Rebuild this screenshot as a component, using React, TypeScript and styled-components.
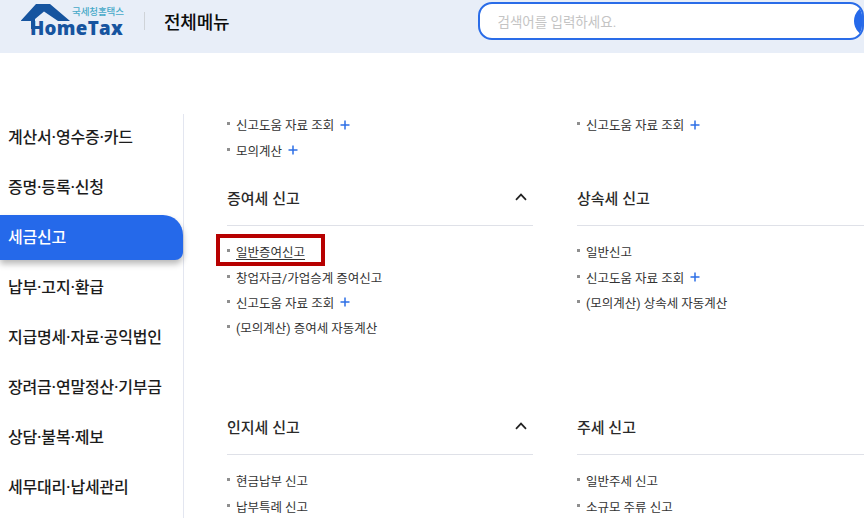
import React from "react";
import styled, { createGlobalStyle } from "styled-components";

const Global = createGlobalStyle`
  html, body { margin: 0; padding: 0; background: #fff; overflow: hidden; }
  body { font-family: Roboto, "Noto Sans CJK KR", "Noto Sans", sans-serif; }
  * { box-sizing: border-box; }
`;

const Page = styled.div`
  width: 864px;
  height: 518px;
  overflow: hidden;
`;

const Header = styled.header`
  height: 53px;
  background: #e8eef8;
  display: flex;
  align-items: center;
  padding: 0 0 12px 21px;
`;

const Logo = styled.div`
  position: relative;
  width: 104px;
  height: 36px;
  align-self: flex-start;
  margin-top: 3px;
  flex: none;
`;

const Roof = styled.svg`
  position: absolute;
  left: 0;
  top: 0;
`;

const LogoSub = styled.span`
  position: absolute;
  left: 51px;
  top: 3px;
  font-size: 9.5px;
  line-height: 12px;
  font-weight: 500;
  color: #46a9c8;
  white-space: nowrap;
  letter-spacing: -0.1px;
`;

const LogoName = styled.span`
  position: absolute;
  left: 9px;
  top: 16px;
  font-family: "Open Sans", "Liberation Sans", sans-serif;
  font-size: 18.7px;
  line-height: 17px;
  font-weight: 800;
  color: #16549f;
  white-space: nowrap;
  letter-spacing: 0.3px;
`;

const HeaderDivider = styled.div`
  width: 1px;
  height: 18px;
  background: #cfd3d8;
  margin: 0 19px;
  flex: none;
`;

const HeaderTitle = styled.h1`
  margin: 0;
  font-size: 18px;
  font-weight: 500;
  color: #0c0c0c;
  letter-spacing: -0.2px;
  width: 313.5px;
  flex: none;
`;

const SearchBox = styled.div`
  width: 386px;
  height: 38px;
  align-self: flex-start;
  margin-top: 2px;
  border: 2px solid #2a6ce8;
  border-radius: 14px;
  background: #fff;
  display: flex;
  align-items: center;
  justify-content: space-between;
  padding-left: 18px;
  font-size: 13.5px;
  color: #c4c4c4;
  flex: none;
  overflow: hidden;
`;

const SearchButton = styled.div`
  width: 32px;
  height: 32px;
  border-radius: 50%;
  background: #2569ea;
  margin-right: -24px;
  flex: none;
`;

const Body = styled.div`
  display: flex;
  padding-top: 61px;
`;

const Sidebar = styled.nav`
  width: 184px;
  height: 404px;
  flex: none;
  border-right: 1px solid #e3e6f0;
  display: flex;
  flex-direction: column;
  gap: 5px;
  padding-top: 1px;
`;

const SideItem = styled.div<{ $active?: boolean }>`
  height: 45px;
  width: 183px;
  display: flex;
  align-items: center;
  padding: 0 0 3px 8px;
  font-size: 16px;
  font-weight: 500;
  letter-spacing: -0.2px;
  color: ${(p) => (p.$active ? "#fff" : "#1c1c1c")};
  background: ${(p) => (p.$active ? "#2569ea" : "transparent")};
  border-radius: 0 20px 8px 0;
  box-shadow: ${(p) => (p.$active ? "0 4px 6px rgba(0,0,0,0.28)" : "none")};
`;

const Content = styled.main`
  margin-top: -2px;
  padding: 0 0 0 43px;
  display: grid;
  grid-template-columns: 306px 306px;
  column-gap: 44px;
  align-content: start;
`;

const Section = styled.section<{ $h: number }>`
  height: ${(p) => p.$h}px;
`;

const SectionHead = styled.div`
  height: 38px;
  border-bottom: 1px solid #dfe1e8;
  display: flex;
  align-items: flex-start;
  justify-content: space-between;
  font-size: 15px;
  font-weight: 500;
  line-height: 22px;
  color: #2a2a2a;
  padding-right: 6px;
`;

const Chevron = styled.svg`
  margin-top: 5px;
`;

const List = styled.ul<{ $top?: number }>`
  list-style: none;
  margin: 0;
  padding: ${(p) => p.$top ?? 0}px 0 0 0;
  display: flex;
  flex-direction: column;
`;

const Item = styled.li`
  height: 25.4px;
  display: flex;
  align-items: center;
  font-size: 12.5px;
  color: #333;
  white-space: nowrap;
  &::before {
    content: "";
    width: 3px;
    height: 3px;
    background: #8f8f8f;
    margin-right: 6px;
    margin-top: -2px;
    flex: none;
  }
`;

const LinkText = styled.span<{ $boxed?: boolean }>`
  position: relative;
  text-decoration: ${(p) => (p.$boxed ? "underline" : "none")};
  text-underline-offset: 2px;
`;

const Highlight = styled.span`
  position: absolute;
  left: -20px;
  top: -8px;
  width: 109px;
  height: 32px;
  border: 4px solid #b70000;
  pointer-events: none;
`;

const Plus = styled.svg`
  margin-left: 6px;
  flex: none;
`;

const PlusIcon = () => (
  <Plus width="10" height="10" viewBox="0 0 10 10">
    <path d="M5 0.5V9.5M0.5 5H9.5" stroke="#2d6fe6" strokeWidth="1.5" fill="none" />
  </Plus>
);

const ChevronUp = () => (
  <Chevron width="12" height="8" viewBox="0 0 12 8">
    <path d="M1 6.8L6 1.6L11 6.8" stroke="#222" strokeWidth="1.7" fill="none" />
  </Chevron>
);

const sideItems = [
  "계산서·영수증·카드",
  "증명·등록·신청",
  "세금신고",
  "납부·고지·환급",
  "지급명세·자료·공익법인",
  "장려금·연말정산·기부금",
  "상담·불복·제보",
  "세무대리·납세관리",
];

type Row = { t: string; plus?: boolean; boxed?: boolean };

const Rows = ({ rows, top }: { rows: Row[]; top?: number }) => (
  <List $top={top}>
    {rows.map((r) => (
      <Item key={r.t}>
        <LinkText $boxed={r.boxed}>
          {r.t}
          {r.boxed && <Highlight />}
        </LinkText>
        {r.plus && <PlusIcon />}
      </Item>
    ))}
  </List>
);

const Head = ({ title, chevron }: { title: string; chevron?: boolean }) => (
  <SectionHead>
    {title}
    {chevron && <ChevronUp />}
  </SectionHead>
);

export default function App() {
  return (
    <Page>
      <Global />
      <Header>
        <Logo>
          <Roof width="104" height="36" viewBox="0 0 104 36">
            <path
              d="M0 17.5L15 1H29L49 18H37L23 8.5L14 16V26H10V18H0Z"
              fill="#16549f"
            />
          </Roof>
          <LogoSub>국세청홈택스</LogoSub>
          <LogoName>HomeTax</LogoName>
        </Logo>
        <HeaderDivider />
        <HeaderTitle>전체메뉴</HeaderTitle>
        <SearchBox>
          검색어를 입력하세요.
          <SearchButton />
        </SearchBox>
      </Header>
      <Body>
        <Sidebar>
          {sideItems.map((s, i) => (
            <SideItem key={s} $active={i === 2}>
              {s}
            </SideItem>
          ))}
        </Sidebar>
        <Content>
          <Section $h={76}>
            <Rows rows={[{ t: "신고도움 자료 조회", plus: true }, { t: "모의계산", plus: true }]} />
          </Section>
          <Section $h={76}>
            <Rows rows={[{ t: "신고도움 자료 조회", plus: true }]} />
          </Section>
          <Section $h={229}>
            <Head title="증여세 신고" chevron />
            <Rows
              top={13}
              rows={[
                { t: "일반증여신고", boxed: true },
                { t: "창업자금/가업승계 증여신고" },
                { t: "신고도움 자료 조회", plus: true },
                { t: "(모의계산) 증여세 자동계산" },
              ]}
            />
          </Section>
          <Section $h={229}>
            <Head title="상속세 신고" />
            <Rows
              top={13}
              rows={[
                { t: "일반신고" },
                { t: "신고도움 자료 조회", plus: true },
                { t: "(모의계산) 상속세 자동계산" },
              ]}
            />
          </Section>
          <Section $h={120}>
            <Head title="인지세 신고" chevron />
            <Rows top={13} rows={[{ t: "현금납부 신고" }, { t: "납부특례 신고" }]} />
          </Section>
          <Section $h={120}>
            <Head title="주세 신고" />
            <Rows top={13} rows={[{ t: "일반주세 신고" }, { t: "소규모 주류 신고" }]} />
          </Section>
        </Content>
      </Body>
    </Page>
  );
}
